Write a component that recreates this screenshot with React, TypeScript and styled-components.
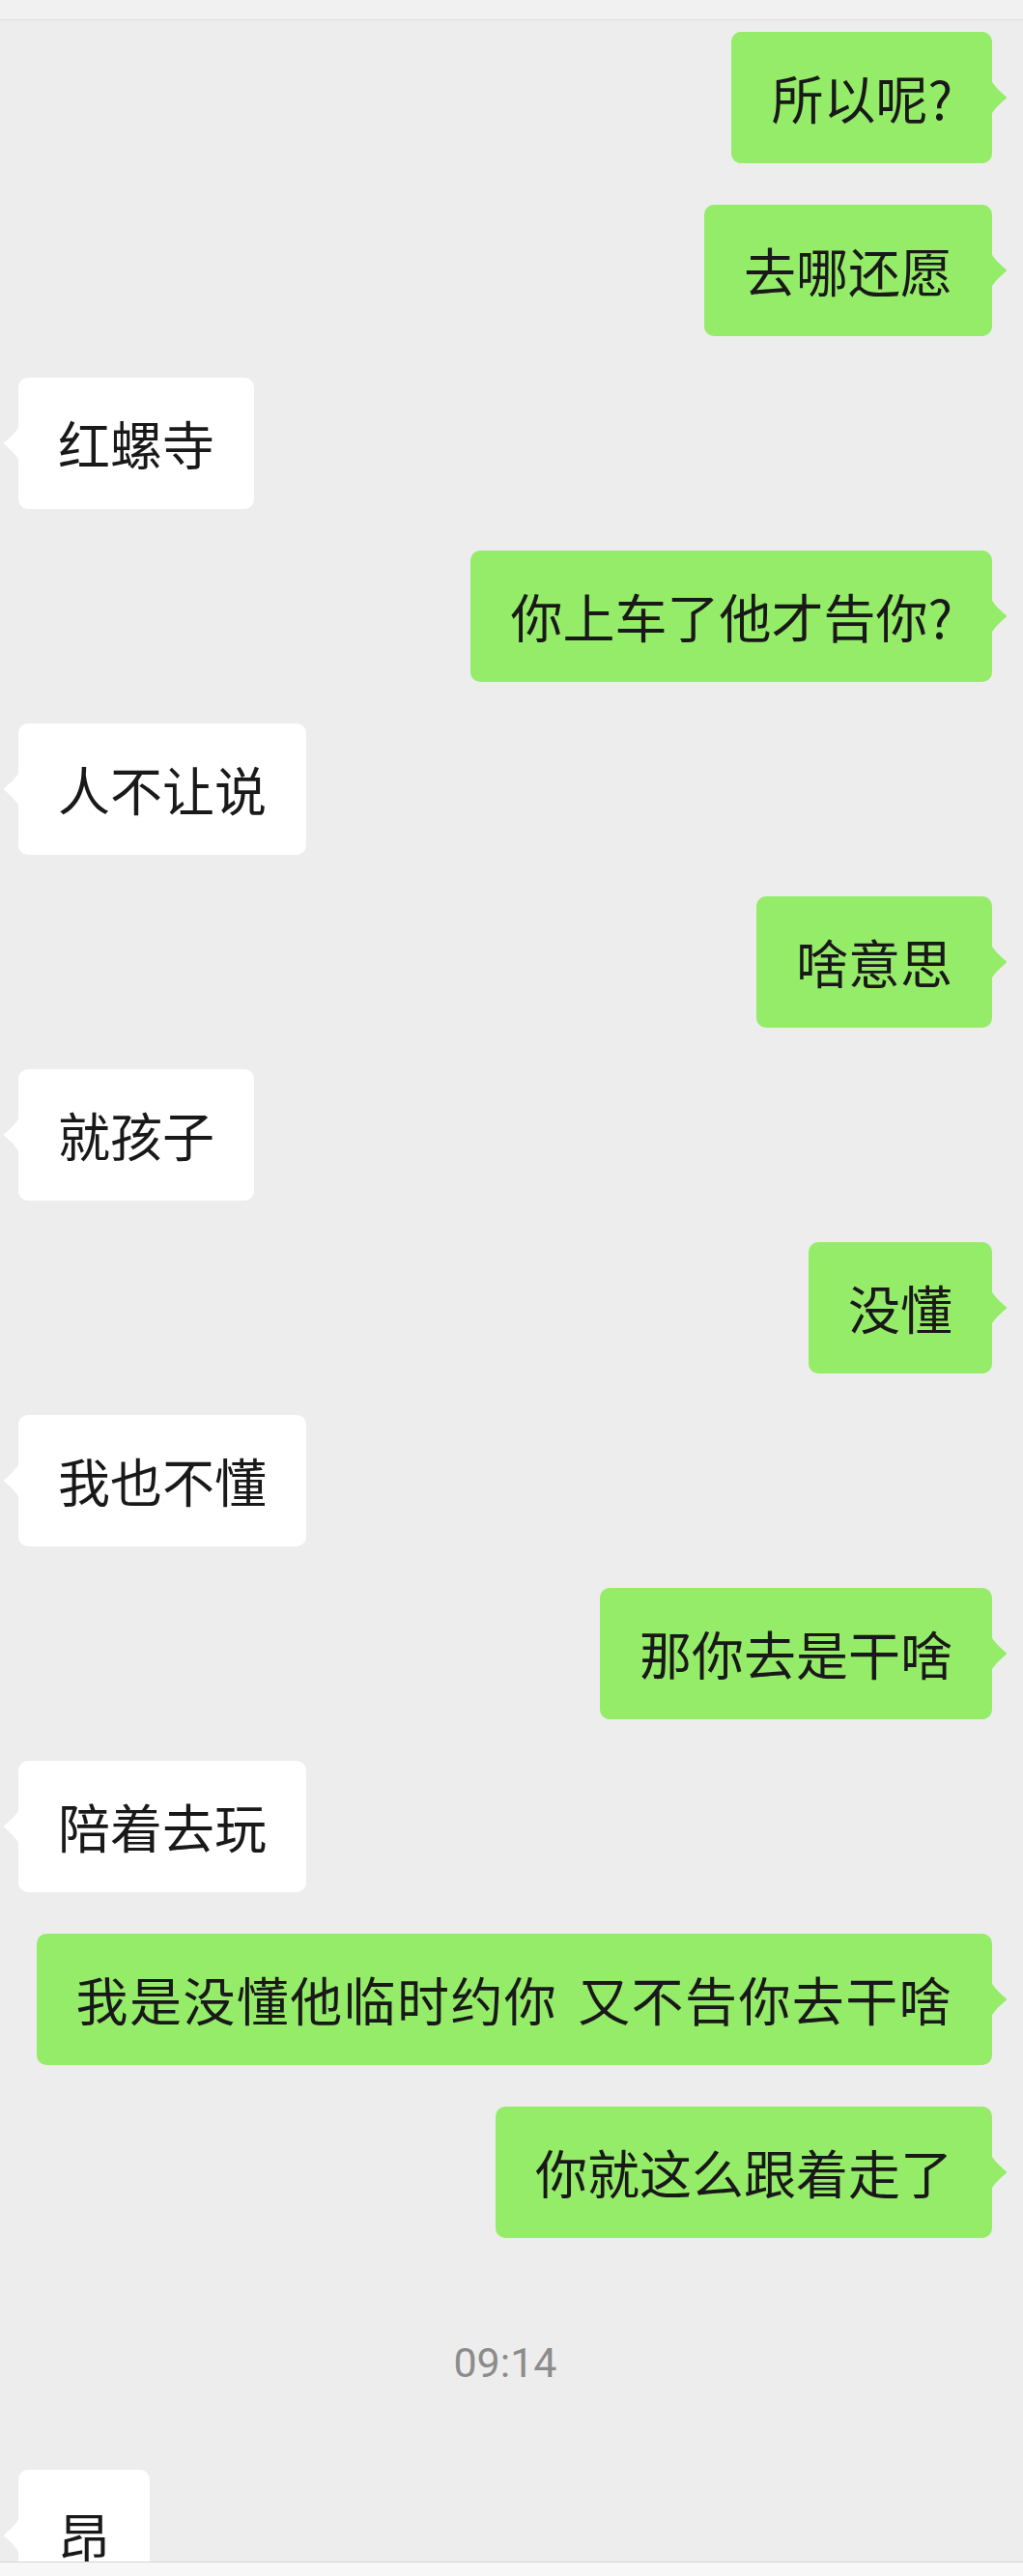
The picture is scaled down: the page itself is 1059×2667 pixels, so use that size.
import React from 'react';
import styled, { createGlobalStyle } from 'styled-components';

const GlobalStyle = createGlobalStyle`
  html, body {
    margin: 0;
    padding: 0;
    background: #ededed;
  }
`;

type Msg = { id: number; mine: boolean; text: React.ReactNode } | { id: number; time: string };

const Page = styled.div`
  width: 1059px;
  height: 2667px;
  background: #ededed;
  display: flex;
  flex-direction: column;
  overflow: hidden;
  font-family: "Noto Sans CJK SC", "Noto Sans", sans-serif;
`;

const TopBar = styled.div`
  height: 20px;
  flex-shrink: 0;
  background: #f1f1f1;
  border-bottom: 1px solid #dedede;
`;

const List = styled.div`
  flex: 1;
  min-height: 0;
  overflow: hidden;
  display: flex;
  flex-direction: column;
  gap: 43px;
  padding: 12px 32px 0 19px;
`;

const Row = styled.div<{ $mine: boolean }>`
  display: flex;
  flex-shrink: 0;
  justify-content: ${p => (p.$mine ? 'flex-end' : 'flex-start')};
`;

const Bubble = styled.div<{ $mine: boolean }>`
  position: relative;
  background: ${p => (p.$mine ? '#95ec69' : '#ffffff')};
  color: #191919;
  border-radius: 10px;
  padding: 38px 41px;
  font-size: 54px;
  line-height: 60px;
  white-space: nowrap;
`;

const Tail = styled.svg<{ $mine: boolean }>`
  position: absolute;
  top: 50%;
  width: 17px;
  height: 36px;
  margin-top: -18px;
  ${p => (p.$mine ? 'right: -16px;' : 'left: -16px; transform: scaleX(-1);')}
  fill: ${p => (p.$mine ? '#95ec69' : '#ffffff')};
`;

// the long line in the shot is set a touch looser than the others
const Loose = styled.span`
  letter-spacing: 1.4px;
`;

const Space = styled.span`
  display: inline-block;
  width: 21px;
`;

const TimeRow = styled.div`
  flex-shrink: 0;
  padding: 61px 0 43px;
  text-align: center;
  font-family: Roboto, "Noto Sans", sans-serif;
  font-size: 43px;
  line-height: 50px;
  color: #8c8c8c;
`;

const BottomBar = styled.div`
  height: 14px;
  flex-shrink: 0;
  background: #f7f7f7;
  border-top: 1px solid #d6d6d6;
`;

const messages: Msg[] = [
  { id: 1, mine: true, text: '所以呢?' },
  { id: 2, mine: true, text: '去哪还愿' },
  { id: 3, mine: false, text: '红螺寺' },
  { id: 4, mine: true, text: '你上车了他才告你?' },
  { id: 5, mine: false, text: '人不让说' },
  { id: 6, mine: true, text: '啥意思' },
  { id: 7, mine: false, text: '就孩子' },
  { id: 8, mine: true, text: '没懂' },
  { id: 9, mine: false, text: '我也不懂' },
  { id: 10, mine: true, text: '那你去是干啥' },
  { id: 11, mine: false, text: '陪着去玩' },
  {
    id: 12,
    mine: true,
    text: (
      <Loose>
        我是没懂他临时约你<Space />又不告你去干啥
      </Loose>
    ),
  },
  { id: 13, mine: true, text: '你就这么跟着走了' },
  { id: 14, time: '09:14' },
  { id: 15, mine: false, text: '昂' },
];

const BubbleTail: React.FC<{ mine: boolean }> = ({ mine }) => (
  <Tail $mine={mine} viewBox="0 0 17 36">
    <path d="M0 0 C3 6 10 12.5 15 16.5 Q17 18 15 19.5 C10 23.5 3 30 0 36 Z" />
  </Tail>
);

export default function App() {
  return (
    <Page>
      <GlobalStyle />
      <TopBar />
      <List>
        {messages.map(m =>
          'time' in m ? (
            <TimeRow key={m.id}>{m.time}</TimeRow>
          ) : (
            <Row key={m.id} $mine={m.mine}>
              <Bubble $mine={m.mine}>
                <BubbleTail mine={m.mine} />
                {m.text}
              </Bubble>
            </Row>
          )
        )}
      </List>
      <BottomBar />
    </Page>
  );
}
